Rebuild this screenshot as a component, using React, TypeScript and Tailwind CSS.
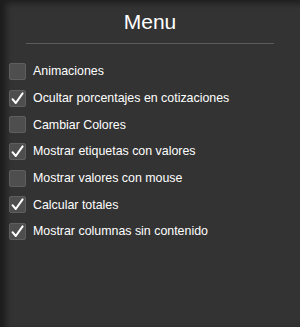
import { FC } from "react";

const options: { label: string; checked: boolean }[] = [
  { label: "Animaciones", checked: false },
  { label: "Ocultar porcentajes en cotizaciones", checked: true },
  { label: "Cambiar Colores", checked: false },
  { label: "Mostrar etiquetas con valores", checked: true },
  { label: "Mostrar valores con mouse", checked: false },
  { label: "Calcular totales", checked: true },
  { label: "Mostrar columnas sin contenido", checked: true },
];

const Box: FC<{ checked: boolean }> = ({ checked }) => (
  <span className="flex h-[17px] w-[17px] shrink-0 items-center justify-center rounded-[2px] border border-[#5e5e5e] bg-[#4e4e4e]">
    {checked && (
      <svg width="15" height="15" viewBox="0 0 15 15" fill="none">
        <path
          d="M2.5 8.2 L5.8 12 L12.6 2.4"
          stroke="#ffffff"
          strokeWidth="2"
          strokeLinecap="round"
          strokeLinejoin="round"
        />
      </svg>
    )}
  </span>
);

export default function App() {
  return (
    <div className="h-[327px] w-[300px] overflow-hidden bg-[#333333] shadow-[inset_6px_3px_6px_rgba(0,0,0,0.45)] font-['Liberation_Sans',Arial,sans-serif] text-white">
      <h1 className="pt-[8px] text-center text-[21px] leading-[28px]">Menu</h1>
      <div className="mx-[26px] mt-[7px] h-px bg-[#5c5c5c]" />
      <ul className="mt-[19px] flex flex-col gap-[9.7px] pl-[9px]">
        {options.map((o) => (
          <li key={o.label} className="flex h-[17px] items-center gap-[7px] text-[12.4px]">
            <Box checked={o.checked} />
            <span>{o.label}</span>
          </li>
        ))}
      </ul>
    </div>
  );
}
